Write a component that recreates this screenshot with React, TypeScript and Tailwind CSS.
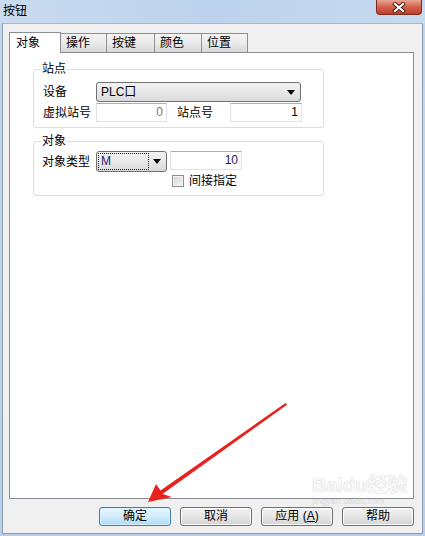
import React from "react";

const font = "font-['Liberation_Sans','Noto_Sans_CJK_SC',sans-serif]";

const Arrow = () => (
  <svg
    className="absolute left-0 top-0 pointer-events-none"
    width={425}
    height={536}
    viewBox="0 0 425 536"
  >
    <polygon
      points="148,502 156,484 160.5,490.5 285.5,403 287,404.8 162.5,494 172,497"
      fill="#e8231f"
    />
  </svg>
);

const CloseButton = () => (
  <div className="mr-[3px] w-[46px] h-[15px] rounded-b-[4px] border border-t-0 border-[#7e2a1f] bg-gradient-to-b from-[#e7a596] via-[#d2614d] to-[#c13d27] flex items-center justify-center">
    <svg width="14" height="11" viewBox="0 0 14 11">
      <path d="M3 2 L11 9 M11 2 L3 9" stroke="#4a1a14" strokeWidth="4" strokeLinecap="square" />
      <path d="M3 2 L11 9 M11 2 L3 9" stroke="#ffffff" strokeWidth="2.2" strokeLinecap="square" />
    </svg>
  </div>
);

const Tab = ({ label, w }: { label: string; w: string }) => (
  <div
    className={`${w} -ml-px h-[19px] border border-b-0 border-[#8e8f8f] bg-gradient-to-b from-[#f3f3f3] via-[#ebebeb] to-[#d8d8d8] pl-[5px] text-[12px] leading-[18px] text-black`}
  >
    {label}
  </div>
);

const Combo = ({ w, children }: { w: string; children: React.ReactNode }) => (
  <div
    className={`${w} h-full rounded-[3px] border border-[#707070] bg-gradient-to-b from-[#f2f2f2] via-[#e9e9e9] to-[#d9d9d9] flex items-center justify-between pr-[5px]`}
  >
    {children}
    <svg width="8" height="5" viewBox="0 0 8 5" className="shrink-0">
      <path d="M0 0 H8 L4 5 Z" fill="#000" />
    </svg>
  </div>
);

const Field = ({ w, value, color }: { w: string; value: string; color: string }) => (
  <div
    className={`${w} h-[19px] border border-[#dfe3e8] border-t-[#abadb3] bg-white text-right pr-[3px] text-[12px] leading-[17px] ${color}`}
  >
    {value}
  </div>
);

const Button = ({ children, primary }: { children: React.ReactNode; primary?: boolean }) => (
  <div
    className={
      primary
        ? "w-[72px] h-[19px] rounded-[3px] border border-[#3c7fb1] bg-gradient-to-b from-[#e8f6fd] via-[#d2edfb] to-[#a9dbf6] text-center text-[12px] leading-[17px] text-black shadow-[inset_0_0_0_1px_#d8f0fd]"
        : "w-[72px] h-[19px] rounded-[3px] border border-[#707070] bg-gradient-to-b from-[#f2f2f2] via-[#e6e6e6] to-[#d4d4d4] text-center text-[12px] leading-[17px] text-black shadow-[inset_0_0_0_1px_#fbfbfb]"
    }
  >
    {children}
  </div>
);

const Group = ({ title, h, children, className }: { title: string; h: string; children: React.ReactNode; className: string }) => (
  <div className={`relative ml-[23px] w-[291px] ${h} rounded-[3px] border border-[#d5dfe5] ${className}`}>
    <div className="absolute left-[7px] -top-[8px] bg-white px-px text-[12px] leading-[14px] text-black">
      {title}
    </div>
    {children}
  </div>
);

export default function App() {
  return (
    <div className={`relative w-[425px] h-[536px] overflow-hidden bg-gradient-to-b from-[#c2d7ee] to-[#b9cfe9] ${font} text-black`}>
      {/* title bar */}
      <div className="h-[23px] flex justify-between items-start bg-gradient-to-r from-[#c9dbef] via-[#bcd2ec] to-[#c7daef]">
        <div className="pl-[3px] pt-[4px] text-[12px] leading-[14px] text-black">按钮</div>
        <CloseButton />
      </div>

      {/* window body */}
      <div className="mx-[2px] mb-[2px] h-[511px] border border-[#8c9cb1] border-t-[#a7b8cb] bg-[#f0f0f0] pl-[6px] pr-[8px] pt-[8px] flex flex-col">
        <div className="h-[20px] flex items-end">
          <div className="relative z-10 -mb-px w-[52px] h-[21px] border border-b-0 border-[#898c95] bg-white pl-[6px] text-[12px] leading-[16px] pt-[2px]">
            对象
          </div>
          <Tab label="操作" w="w-[47px]" />
          <Tab label="按键" w="w-[49px]" />
          <Tab label="颜色" w="w-[48px]" />
          <Tab label="位置" w="w-[47px]" />
        </div>

        <div className="w-[405px] h-[447px] border border-[#898c95] bg-white pt-[16px]">
          <Group title="站点" h="h-[59px]" className="">
            <div className="pl-[9px] pt-[12px]">
              <div className="h-[20px] flex items-center">
                <div className="w-[53px] text-[12px] leading-[14px]">设备</div>
                <Combo w="w-[205px]">
                  <span className="pl-[4px] text-[12px] leading-[14px]">PLC口</span>
                </Combo>
              </div>
              <div className="mt-px flex items-center">
                <div className="w-[53px] text-[12px] leading-[14px]">虚拟站号</div>
                <Field w="w-[71px]" value="0" color="text-[#8a7560]" />
                <div className="ml-[10px] w-[53px] text-[12px] leading-[14px]">站点号</div>
                <Field w="w-[72px]" value="1" color="text-black" />
              </div>
            </div>
          </Group>

          <Group title="对象" h="h-[55px]" className="mt-[13px]">
            <div className="pl-[8px] pt-[9px]">
              <div className="flex items-start">
                <div className="w-[54px] h-[21px] flex items-center text-[12px] leading-[14px]">对象类型</div>
                <div className="h-[21px]">
                  <Combo w="w-[71px]">
                    <div className="ml-px w-[51px] h-[17px] border border-dotted border-[#222] pl-[2px] text-[12px] leading-[15px] text-[#1e2470]">
                      M
                    </div>
                  </Combo>
                </div>
                <div className="ml-[3px]">
                  <Field w="w-[72px]" value="10" color="text-[#141a5e]" />
                </div>
              </div>
              <div className="mt-[2px] pl-[130px] flex items-center">
                <div className="w-[12px] h-[12px] border border-[#8e8f8f] bg-gradient-to-br from-[#d6d6d6] to-[#f4f4f4] shadow-[inset_0_0_0_1px_#f4f4f4]" />
                <div className="ml-[5px] text-[12px] leading-[14px]">间接指定</div>
              </div>
            </div>
          </Group>
        </div>

        <div className="mt-[8px] w-[405px] flex justify-end gap-[9px]">
          <Button primary>确定</Button>
          <Button>取消</Button>
          <Button>
            应用 (<span className="underline">A</span>)
          </Button>
          <Button>帮助</Button>
        </div>
      </div>

      {/* watermark */}
      <div className="absolute left-[312px] top-[474px] pointer-events-none opacity-70">
        <div className="text-[20px] leading-[22px] font-bold text-[#f4f4f4] [text-shadow:0_0_1px_#a8a8a8]">Baidu经验</div>
        <div className="text-[9px] leading-[10px] text-[#d0d0d0]">jingyan.baidu.com</div>
      </div>

      <Arrow />
    </div>
  );
}
